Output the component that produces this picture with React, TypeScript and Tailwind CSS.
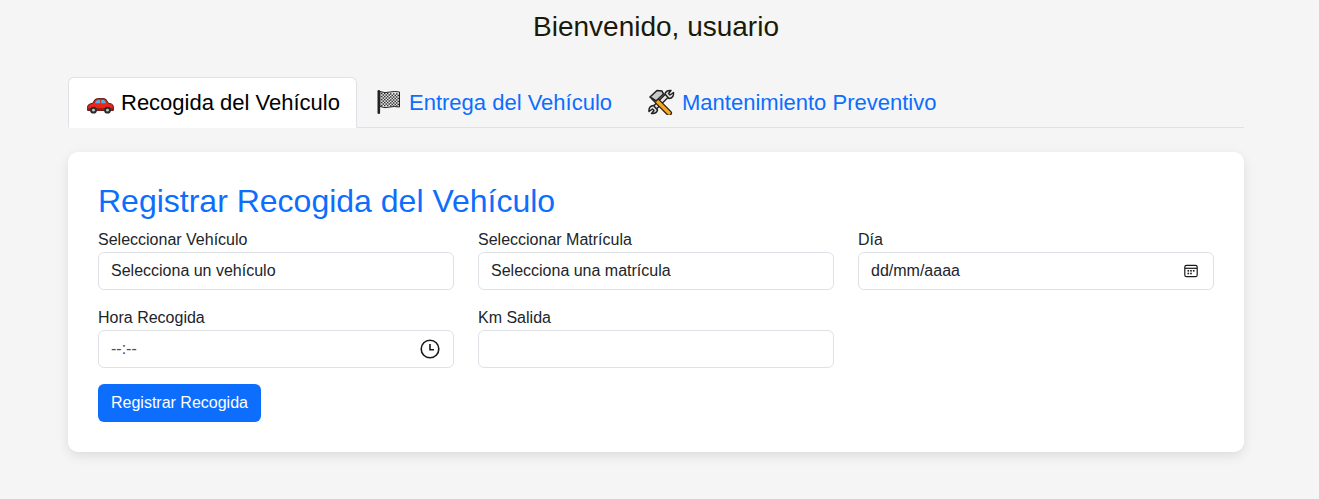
import React from 'react';

function CarIcon() {
  return (
    <svg width="27" height="16" viewBox="0 0 27 16" className="shrink-0 mt-[7px]">
      <path d="M6 5 Q7.5 0.6 10.5 0.6 L17 0.6 Q19.5 0.6 21 5 L24.5 6 Q26.4 6.8 26.4 9 L26.4 12.5 L0.6 12.5 L0.6 9 Q0.6 6.6 3 6 Z" fill="#e8261c" stroke="#4a120e" strokeWidth="0.9" />
      <path d="M8 5.2 Q9 2 11 2 L13 2 L13 5.2 Z M14.2 2 L16.6 2 Q18 2 19 5.2 L14.2 5.2 Z" fill="#3dbbe8" />
      <rect x="1" y="10" width="25" height="2.4" fill="#a8170f" />
      <circle cx="6.5" cy="12.2" r="3.4" fill="#2b2b2b" />
      <circle cx="6.5" cy="12.2" r="1.4" fill="#c8c8c8" />
      <circle cx="20.5" cy="12.2" r="3.4" fill="#2b2b2b" />
      <circle cx="20.5" cy="12.2" r="1.4" fill="#c8c8c8" />
    </svg>
  );
}

function FlagIcon() {
  const cells = [];
  for (let y = 0; y < 9; y++) {
    for (let x = 0; x < 12; x++) {
      if ((x + y) % 2 === 0) {
        cells.push(<rect key={`${x}-${y}`} x={5 + x * 1.5} y={3.8 + y * 1.5 + (x > 5 ? 0.4 : 0)} width="1.5" height="1.5" fill="#333" />);
      }
    }
  }
  return (
    <svg width="25" height="26" viewBox="0 0 25 26" className="shrink-0">
      <rect x="1.5" y="1" width="2.6" height="24" rx="1.2" fill="#222" />
      <path d="M4 2.5 Q9 4.5 14 3 Q19 2 23.5 3 L23.5 18 Q18 17 14 18 Q9 19.5 4 17.5 Z" fill="#eee" stroke="#222" strokeWidth="1" />
      {cells}
    </svg>
  );
}

function ToolsIcon() {
  return (
    <svg width="27" height="26" viewBox="0 0 27 26" className="shrink-0">
      <path d="M6.5 19 L19 6.5" stroke="#222" strokeWidth="5.5" />
      <path d="M6.5 19 L19 6.5" stroke="#e6e6e6" strokeWidth="2.6" />
      <path d="M17 5 Q18 1 23 1.5 L20.5 4.5 L22 6 L25.5 3.5 Q26 9 21 9.5 Z" fill="#e6e6e6" stroke="#222" strokeWidth="1.5" strokeLinejoin="round" />
      <path d="M9.5 21 Q8.5 25 3.5 24.5 L6 21.5 L4.5 20 L1 22.5 Q0.5 17 5.5 16.5 Z" fill="#e6e6e6" stroke="#222" strokeWidth="1.5" strokeLinejoin="round" />
      <path d="M6 9 L21 24" stroke="#222" strokeWidth="6" strokeLinecap="round" />
      <path d="M7 10 L21 24" stroke="#f5a623" strokeWidth="3.4" strokeLinecap="round" />
      <path d="M2 8 L9 1.5 L14 2 L15.5 5 L8 12 Z" fill="#c9c9c9" stroke="#222" strokeWidth="1.6" strokeLinejoin="round" />
    </svg>
  );
}

function CalendarIcon() {
  return (
    <svg width="14" height="14" viewBox="0 0 14 14" fill="none" stroke="#1a1a1a" strokeWidth="1.2">
      <rect x="0.8" y="1.3" width="12.4" height="11.4" rx="1.8" />
      <path d="M1 4.3 H13" />
      <g fill="#1a1a1a" stroke="none">
        <rect x="3.5" y="6" width="1.6" height="1.6" />
        <rect x="6.2" y="6" width="1.6" height="1.6" />
        <rect x="8.9" y="6" width="1.6" height="1.6" />
        <rect x="3.5" y="8.7" width="1.6" height="1.6" />
        <rect x="6.2" y="8.7" width="1.6" height="1.6" />
      </g>
    </svg>
  );
}

function ClockIcon() {
  return (
    <svg width="20" height="20" viewBox="0 0 20 20" fill="none" stroke="#1a1a1a" strokeWidth="1.6">
      <circle cx="10" cy="10" r="8.8" />
      <path d="M10 5 V10.8 H14" />
    </svg>
  );
}

function Field({ label, children }: { label: string; children: React.ReactNode }) {
  return (
    <div className="w-[356px]">
      <label className="block h-[25px] pt-[1px] text-[16px] leading-6 text-[#212529]">{label}</label>
      {children}
    </div>
  );
}

const boxClass =
  'relative flex items-center justify-between h-[38px] w-full bg-white border border-[#dee2e6] rounded-[6px] pl-3 text-[16px] text-[#212529]';

export default function App() {
  return (
    <div className="min-h-[499px] bg-[#f5f5f5] font-['Liberation_Sans',Arial,sans-serif] pl-[68px] pr-[75px]">
      <h2 className="pt-[9px] h-[77px] text-center text-[28px] leading-[36px] text-[#1a1a0a]">Bienvenido, usuario</h2>

      <div className="flex h-[51px] border-b border-[#dee2e6] text-[22px] whitespace-nowrap">
        <div className="flex items-center gap-[7px] h-[51px] w-[289px] px-[18px] bg-white border border-[#dee2e6] border-b-white rounded-t-[6px] text-black">
          <CarIcon />
          <span>Recogida del Vehículo</span>
        </div>
        <div className="flex items-center gap-[8px] h-[50px] pl-[19px] pr-[18px] text-[#0d6efd]">
          <FlagIcon />
          <span>Entrega del Vehículo</span>
        </div>
        <div className="flex items-center gap-[7px] h-[50px] pl-[18px] pr-[18px] text-[#0d6efd]">
          <ToolsIcon />
          <span>Mantenimiento Preventivo</span>
        </div>
      </div>

      <section className="mt-[24px] h-[300px] bg-white rounded-[10px] shadow-[0_4px_12px_rgba(0,0,0,0.1)] p-[30px]">
        <h3 className="text-[32px] leading-[38px] text-[#0d6efd] mb-[7px]">Registrar Recogida del Vehículo</h3>

        <div className="flex flex-wrap gap-x-[24px] gap-y-[15px]">
          <Field label="Seleccionar Vehículo">
            <div className={boxClass}>Selecciona un vehículo</div>
          </Field>
          <Field label="Seleccionar Matrícula">
            <div className={boxClass}>Selecciona una matrícula</div>
          </Field>
          <Field label="Día">
            <div className={`${boxClass} pr-[15px]`}>
              <span>dd/mm/aaaa</span>
              <CalendarIcon />
            </div>
          </Field>
          <Field label="Hora Recogida">
            <div className={`${boxClass} pr-[13px]`}>
              <span className="text-[#495057]">--:--</span>
              <ClockIcon />
            </div>
          </Field>
          <Field label="Km Salida">
            <div className={boxClass} />
          </Field>
        </div>

        <button className="mt-[16px] h-[38px] w-[163px] bg-[#0d6efd] text-white text-[16px] rounded-[6px]">
          Registrar Recogida
        </button>
      </section>
    </div>
  );
}
